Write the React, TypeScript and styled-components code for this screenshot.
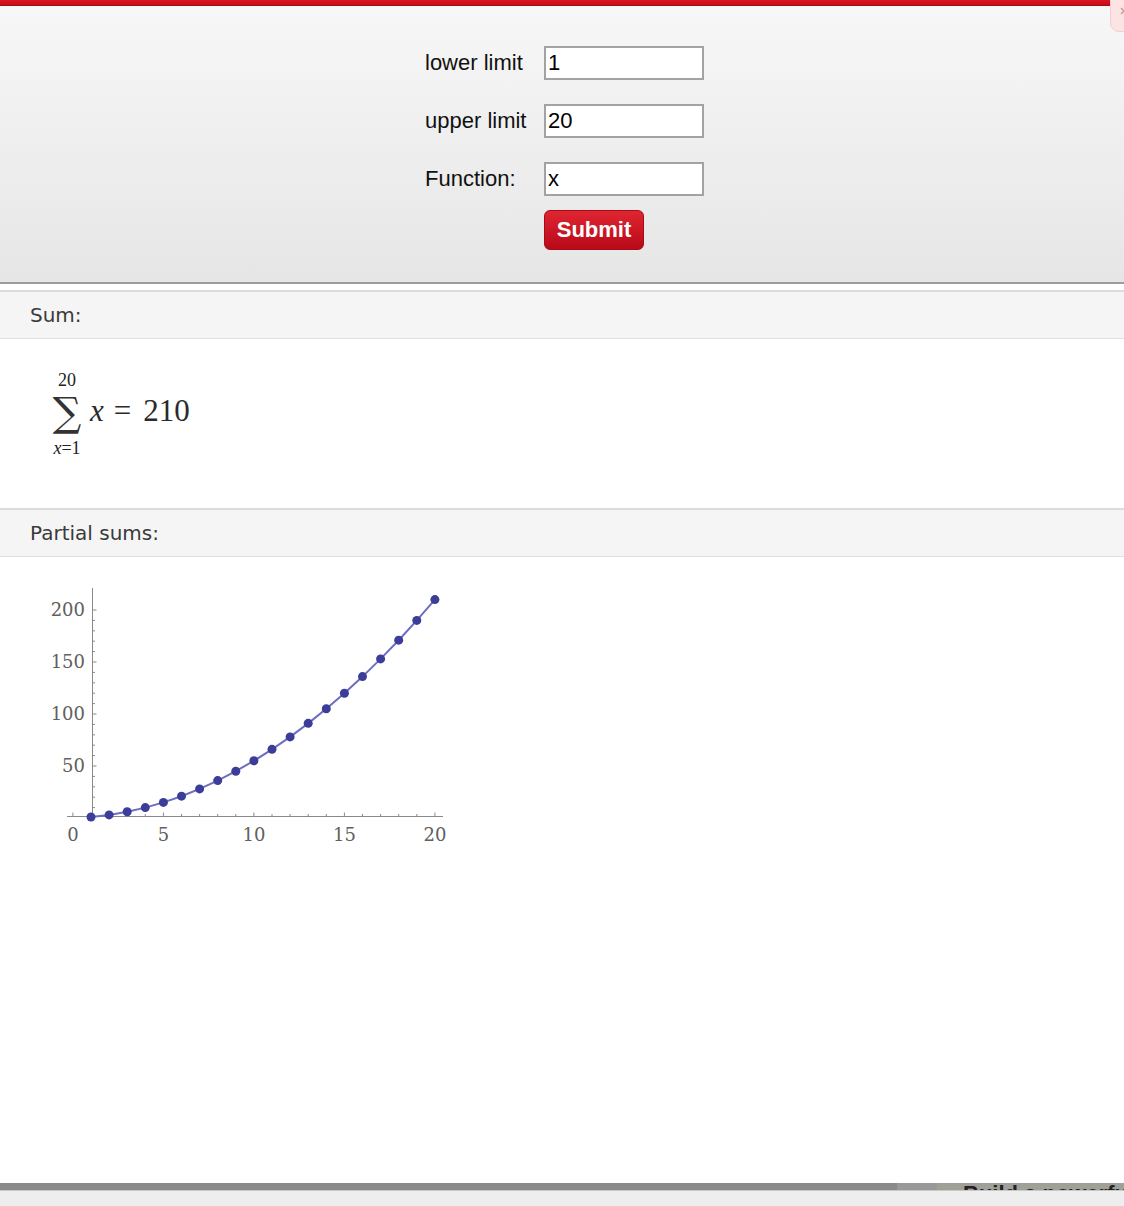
import React from "react";
import styled, { createGlobalStyle } from "styled-components";

const Global = createGlobalStyle`
  html, body { margin: 0; padding: 0; background: #fff; }
  body { font-family: "Liberation Sans", Arial, sans-serif; }
  #root { min-height: 100vh; }
`;

const Page = styled.div`
  position: relative;
  min-height: 100vh;
  display: flex;
  flex-direction: column;
  overflow: hidden;
`;

const TopBar = styled.div`
  height: 5px;
  background: linear-gradient(#da1520, #c50d19);
  border-bottom: 1px solid #a50a14;
`;

const CornerTab = styled.div`
  position: absolute;
  top: -10px;
  right: -20px;
  width: 34px;
  height: 42px;
  border-radius: 9px;
  background: #fbe4e3;
  border: 1px solid #f2d0cf;
  box-sizing: border-box;
  display: flex;
  align-items: center;
  padding-left: 9px;
`;

const FormPanel = styled.div`
  background: linear-gradient(#f7f7f7, #e6e6e6);
  border-bottom: 2px solid #9c9c9c;
  padding: 40px 0 32px;
  display: flex;
  justify-content: center;
`;

const FormGrid = styled.div`
  display: grid;
  grid-template-columns: 119px 160px;
  row-gap: 24px;
  align-items: center;
  margin-left: 5px;
`;

const Label = styled.label`
  font-family: "Liberation Sans", Arial, sans-serif;
  font-size: 22px;
  color: #111;
`;

const Input = styled.input`
  box-sizing: border-box;
  width: 160px;
  height: 34px;
  border: 2px solid #a2a2a2;
  background: #fff;
  font-family: "Liberation Sans", Arial, sans-serif;
  font-size: 22px;
  color: #000;
  padding: 0 2px;
  outline: none;
`;

const SubmitButton = styled.button`
  grid-column: 2;
  margin-top: -10px;
  width: 100px;
  height: 40px;
  border-radius: 6px;
  border: 1px solid #a80a16;
  background: linear-gradient(#df2632, #b80918);
  color: #fff;
  font-family: "Liberation Sans", Arial, sans-serif;
  font-weight: bold;
  font-size: 22px;
  padding: 0;
  cursor: pointer;
`;

const Gap = styled.div`
  height: 6px;
`;

const SectionHeader = styled.div`
  box-sizing: border-box;
  height: 49px;
  background: #f5f5f5;
  border-top: 2px solid #dcdcdc;
  border-bottom: 1px solid #e0e0e0;
  display: flex;
  align-items: center;
  padding-left: 30px;
  font-family: "DejaVu Sans", Verdana, sans-serif;
  font-size: 20px;
  color: #3a3a3a;
`;

const SumBody = styled.div`
  box-sizing: border-box;
  height: 169px;
  display: flex;
  align-items: flex-start;
  padding: 32px 0 0 49px;
  font-family: "Liberation Serif", "Times New Roman", serif;
  color: #222;
`;

const Sigma = styled.div`
  display: flex;
  flex-direction: column;
  align-items: center;
  width: 36px;
`;

const Limit = styled.span<{ $lower?: boolean }>`
  font-size: 18px;
  line-height: 18px;
  color: #222;
  margin-top: ${(p) => (p.$lower ? "6px" : "0")};
`;

const SigmaGlyph = styled.span`
  font-family: "DejaVu Serif", serif;
  font-size: 40px;
  line-height: 42px;
  height: 42px;
  margin-top: 2px;
  color: #333;
`;

const Expr = styled.span`
  font-size: 31px;
  line-height: 34px;
  margin: 23px 0 0 5px;
  color: #2a2a2a;
`;

const Var = styled.i`
  font-style: italic;
`;

const Eq = styled.span`
  margin: 0 12px 0 10px;
`;

const ChartBody = styled.div`
  padding: 23px 0 0 40px;
  flex: 1;
`;

const Footer = styled.div`
  height: 23px;
  display: flex;
  flex-direction: column;
`;

const FooterBand = styled.div`
  height: 7px;
  background: #8a8a8a;
  display: flex;
  justify-content: flex-end;
  overflow: hidden;
`;

const FooterTab = styled.div`
  width: 40px;
  background: #999;
`;

const FooterPromo = styled.div`
  box-sizing: border-box;
  width: 187px;
  background: #a09f98;
  padding-left: 26px;
  font-family: "Liberation Sans", Arial, sans-serif;
  font-weight: bold;
  font-size: 22px;
  line-height: 22px;
  color: #222;
  white-space: nowrap;
  overflow: hidden;
`;

const FooterBase = styled.div`
  flex: 1;
  background: #eee;
  border-top: 1px solid #c8c8c8;
`;

const X0 = 72.9;
const XS = 18.1;
const Y0 = 818;
const YS = 1.04;

const Chart: React.FC = () => {
  const pts = Array.from({ length: 20 }, (_, i) => {
    const n = i + 1;
    return [X0 + XS * n, Y0 - YS * ((n * (n + 1)) / 2)];
  });
  const path = pts.map((p, i) => `${i ? "L" : "M"}${p[0].toFixed(1)},${p[1].toFixed(1)}`).join(" ");
  const xTicks = Array.from({ length: 21 }, (_, i) => i);
  const yTicks = Array.from({ length: 21 }, (_, i) => i * 10).filter((v) => v > 0);
  return (
    <svg width={420} height={270} viewBox="40 580 420 270">
      <g stroke="#8a8a8a" strokeWidth={1} fill="none">
        <line x1={67} y1={816.5} x2={443} y2={816.5} />
        <line x1={92.5} y1={588} x2={92.5} y2={817} />
        {xTicks.map((k) => {
          const x = X0 + XS * k;
          const h = k % 5 === 0 ? 4 : 2.5;
          return <line key={`x${k}`} x1={x} y1={816.5} x2={x} y2={816.5 - h} />;
        })}
        {yTicks.map((v) => {
          const y = Y0 - YS * v;
          const w = v % 50 === 0 ? 4 : 2.5;
          return <line key={`y${v}`} x1={92.5} y1={y} x2={92.5 + w} y2={y} />;
        })}
      </g>
      <g fontFamily='"DejaVu Serif", serif' fontSize={18} fill="#606060">
        {[50, 100, 150, 200].map((v) => (
          <text key={v} x={85} y={Y0 - YS * v + 6} textAnchor="end">
            {v}
          </text>
        ))}
        {[0, 5, 10, 15, 20].map((k) => (
          <text key={k} x={X0 + XS * k} y={841} textAnchor="middle">
            {k}
          </text>
        ))}
      </g>
      <path d={path} stroke="#6d6dc2" strokeWidth={2} fill="none" />
      {pts.map((p, i) => (
        <circle key={i} cx={p[0]} cy={p[1]} r={4.5} fill="#3c3c99" />
      ))}
    </svg>
  );
};

export default function App() {
  return (
    <Page>
      <Global />
      <TopBar />
      <CornerTab>
        <svg width={8} height={8} viewBox="0 0 8 8">
          <path d="M1 1L7 7M7 1L1 7" stroke="#c99a9a" strokeWidth={1.5} />
        </svg>
      </CornerTab>
      <FormPanel>
        <FormGrid>
          <Label>lower limit</Label>
          <Input defaultValue="1" />
          <Label>upper limit</Label>
          <Input defaultValue="20" />
          <Label>Function:</Label>
          <Input defaultValue="x" />
          <SubmitButton>Submit</SubmitButton>
        </FormGrid>
      </FormPanel>
      <Gap />
      <SectionHeader>Sum:</SectionHeader>
      <SumBody>
        <Sigma>
          <Limit>20</Limit>
          <SigmaGlyph>∑</SigmaGlyph>
          <Limit $lower>
            <Var>x</Var>=1
          </Limit>
        </Sigma>
        <Expr>
          <Var>x</Var>
          <Eq>=</Eq>210
        </Expr>
      </SumBody>
      <SectionHeader>Partial sums:</SectionHeader>
      <ChartBody>
        <Chart />
      </ChartBody>
      <Footer>
        <FooterBand>
          <FooterTab />
          <FooterPromo>Build a powerful</FooterPromo>
        </FooterBand>
        <FooterBase />
      </Footer>
    </Page>
  );
}
